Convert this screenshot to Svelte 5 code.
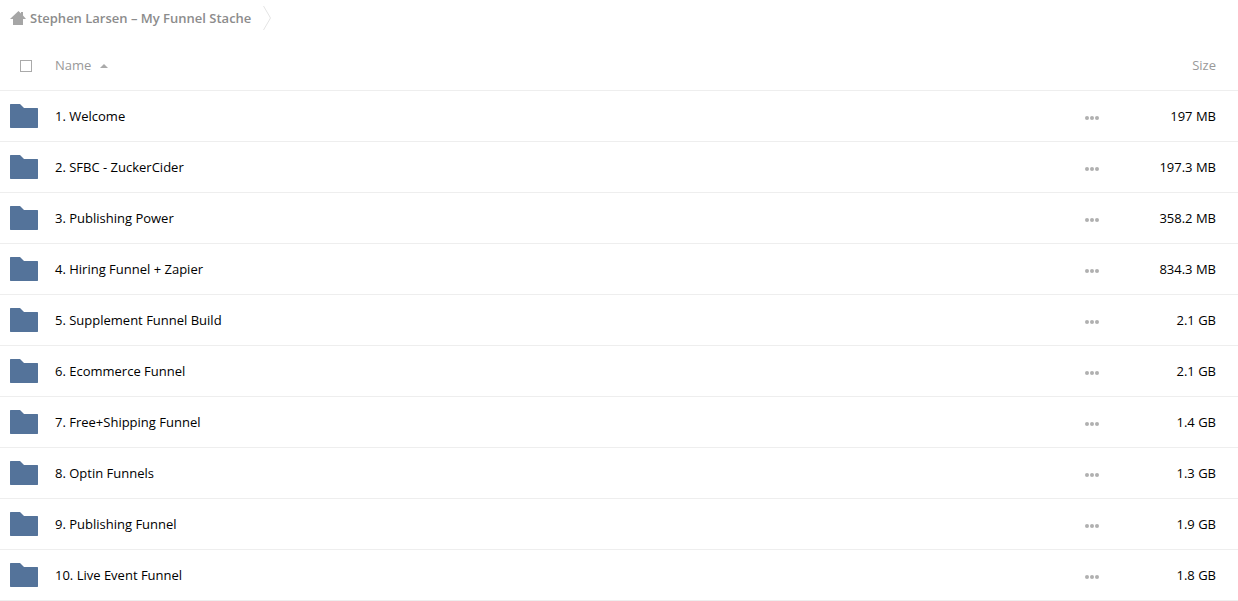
<script>
  let files = [
    { id: 1, name: "1. Welcome", size: "197 MB", selected: false },
    { id: 2, name: "2. SFBC - ZuckerCider", size: "197.3 MB", selected: false },
    { id: 3, name: "3. Publishing Power", size: "358.2 MB", selected: false },
    { id: 4, name: "4. Hiring Funnel + Zapier", size: "834.3 MB", selected: false },
    { id: 5, name: "5. Supplement Funnel Build", size: "2.1 GB", selected: false },
    { id: 6, name: "6. Ecommerce Funnel", size: "2.1 GB", selected: false },
    { id: 7, name: "7. Free+Shipping Funnel", size: "1.4 GB", selected: false },
    { id: 8, name: "8. Optin Funnels", size: "1.3 GB", selected: false },
    { id: 9, name: "9. Publishing Funnel", size: "1.9 GB", selected: false },
    { id: 10, name: "10. Live Event Funnel", size: "1.8 GB", selected: false }
  ];

  let ascending = true;

  function toggleSort() {
    ascending = !ascending;
    files = [...files].reverse();
  }

  function selectAll(event) {
    const checked = event.target.checked;
    files = files.map(file => ({ ...file, selected: checked }));
  }
</script>

<div class="files">
  <nav class="breadcrumb" aria-label="Breadcrumb">
    <a class="crumb" href="#home">
      <svg class="home" viewBox="0 0 16 14" aria-hidden="true">
        <path d="M8.5 0L11 2.4V1H13V4.5L16 8H13V14H3V8H0Z" />
      </svg>
      <span>Stephen Larsen – My Funnel Stache</span>
    </a>
    <svg class="separator" viewBox="0 0 8 24" aria-hidden="true">
      <path d="M0.5 0L7.5 12L0.5 24" />
    </svg>
  </nav>

  <table>
    <thead>
      <tr>
        <th class="col-icon">
          <input type="checkbox" aria-label="Select all" on:change={selectAll} />
        </th>
        <th class="col-name">
          <button class="sort" on:click={toggleSort}>
            Name
            <span class="arrow" class:down={!ascending}></span>
          </button>
        </th>
        <th class="col-actions"></th>
        <th class="col-size">Size</th>
      </tr>
    </thead>
    <tbody>
      {#each files as file (file.id)}
        <tr class:selected={file.selected}>
          <td class="col-icon">
            <svg class="folder" viewBox="0 0 28 24" aria-hidden="true">
              <path d="M0.5 0H10L14 4H27.5L28 4.5V23.5L27.5 24H0.5L0 23.5V0.5Z" />
            </svg>
          </td>
          <td class="col-name"><a href="#folder-{file.id}">{file.name}</a></td>
          <td class="col-actions">
            <button class="more" aria-label="Actions for {file.name}">
              <svg viewBox="0 0 14 4" aria-hidden="true">
                <circle cx="2" cy="2" r="2" />
                <circle cx="7" cy="2" r="2" />
                <circle cx="12" cy="2" r="2" />
              </svg>
            </button>
          </td>
          <td class="col-size">{file.size}</td>
        </tr>
      {/each}
    </tbody>
  </table>
</div>

<style>
:global(body) {
  margin: 0;
  background: #fff;
}

.files {
  font-family: "Open Sans", "Noto Sans", sans-serif;
  font-size: 13px;
  line-height: 20px;
  color: #000;
}

svg {
  display: block;
}

a {
  color: inherit;
  text-decoration: none;
}

button {
  padding: 0;
  border: none;
  background: none;
  color: inherit;
  font: inherit;
  cursor: pointer;
}

.breadcrumb {
  display: flex;
  align-items: center;
  gap: 12px;
  height: 36px;
  padding: 0 10px 4px;
}

.crumb {
  display: flex;
  align-items: center;
  gap: 4px;
  color: #8c8c8c;
  font-weight: 600;
}

.home {
  width: 16px;
  height: 14px;
  fill: #a6a6a6;
}

.separator {
  width: 8px;
  height: 24px;
  fill: none;
  stroke: #e4e4e4;
}

table {
  width: 100%;
  table-layout: fixed;
  border-collapse: separate;
  border-spacing: 0;
}

th,
td {
  box-sizing: border-box;
  height: 51px;
  padding: 0;
  border-bottom: 1px solid #eee;
  text-align: left;
  vertical-align: middle;
}

th {
  color: #999;
  font-weight: 400;
}

.col-icon {
  width: 55px;
  padding-left: 10px;
}

.col-actions {
  width: 44px;
}

.col-size {
  width: 119px;
  padding-right: 22px;
  text-align: right;
}

input {
  display: block;
  appearance: none;
  box-sizing: border-box;
  width: 12px;
  height: 12px;
  margin: 2px 10px 0;
  border: 1px solid #aaa;
  background: #fff;
}

input:checked {
  background: #54739a;
}

.sort {
  display: flex;
  align-items: center;
  gap: 9px;
}

.arrow {
  margin-top: 2px;
  border: 4px solid transparent;
  border-top: none;
  border-bottom-color: #aaa;
}

.arrow.down {
  transform: rotate(180deg);
}

.folder {
  width: 28px;
  height: 24px;
  fill: #54739a;
}

.more {
  display: block;
  padding: 8px 10px 4px;
}

.more svg {
  width: 14px;
  height: 4px;
  fill: #b0b0b0;
}

tbody tr:hover,
tr.selected {
  background: #f8f8f8;
}
</style>
